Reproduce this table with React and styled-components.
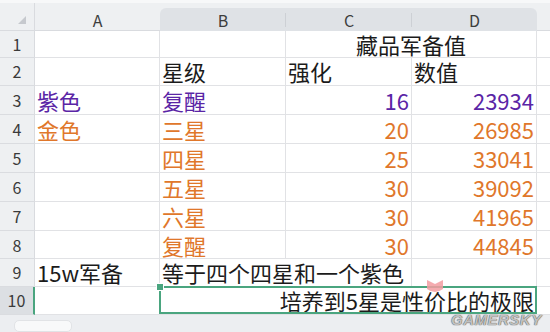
import React from 'react';
import styled, { createGlobalStyle, css } from 'styled-components';

const Global = createGlobalStyle`
  html, body { margin: 0; padding: 0; background: #f2f3f5; }
  body { font-family: "Noto Sans CJK SC", "Noto Sans", sans-serif; }
  #root { width: 550px; height: 332px; }
`;

const COLS = '35px 125px 126px 126px 125px 1fr';
const GRID = '#e1e2e5';
const GREEN = '#4aa57f';
const PURPLE = '#5a25a6';
const ORANGE = '#e0772b';
const INK = '#1b1b1b';

const Page = styled.div`
  position: relative;
  width: 550px;
  height: 332px;
  overflow: hidden;
  background: #f2f3f5;
  display: flex;
  flex-direction: column;
`;

const TopStrip = styled.div`
  height: 3px;
  background: #f7f8f9;
`;

const HeaderRow = styled.div`
  display: grid;
  grid-template-columns: ${COLS};
  height: 28px;
  background: #eef0f2;
  border-bottom: 1px solid #d9dbdf;
  box-sizing: border-box;
`;

const Corner = styled.div`
  border-right: 1px solid #d9dbdf;
  display: flex;
  align-items: flex-start;
  justify-content: flex-end;
  padding: 13px 8px 0 0;
`;

const Triangle = styled.div`
  width: 0;
  height: 0;
  border-left: 8px solid transparent;
  border-bottom: 8px solid #c6c9ce;
`;

const ColLetter = styled.div`
  display: flex;
  align-items: center;
  justify-content: center;
  font-size: 16px;
  color: #3d3d3d;
  padding-top: 4px;
`;

const SelectedBand = styled.div`
  grid-column: 3 / 6;
  margin-top: 5px;
  margin-bottom: -1px;
  background: #dfe2e6;
  border-radius: 6px 6px 0 0;
  border-bottom: 2px solid ${GREEN};
  display: grid;
  grid-template-columns: 126px 126px 125px;
`;

const BandLetter = styled.div`
  display: flex;
  align-items: center;
  justify-content: center;
  font-size: 16px;
  color: #3d3d3d;
  position: relative;
  ${p => p.$sep && css`
    &::after {
      content: '';
      position: absolute;
      right: 0;
      top: 5px;
      bottom: 5px;
      width: 1px;
      background: #cdd0d5;
    }
  `}
`;

const Row = styled.div`
  display: grid;
  grid-template-columns: ${COLS};
  height: ${p => p.$h}px;
`;

const RowNum = styled.div`
  display: flex;
  align-items: center;
  justify-content: center;
  background: ${p => (p.$selected ? '#dcdfe3' : '#eef0f2')};
  border-right: ${p => (p.$selected ? `2px solid ${GREEN}` : '1px solid #d9dbdf')};
  border-bottom: 1px solid #dadce0;
  font-size: 16px;
  color: #3a3a3a;
  box-sizing: border-box;
`;

const Cell = styled.div`
  position: relative;
  grid-column: span ${p => p.$span || 1};
  display: flex;
  align-items: center;
  justify-content: ${p =>
    p.$align === 'right' ? 'flex-end' : p.$align === 'center' ? 'center' : 'flex-start'};
  padding: ${p => (p.$align === 'right' ? '0 2px 0 0' : p.$align === 'center' ? '0' : '0 0 0 2px')};
  background: #fff;
  border-right: 1px solid ${GRID};
  border-bottom: 1px solid ${GRID};
  box-sizing: border-box;
  font-size: 22px;
  line-height: 1;
  color: ${p => p.$color || INK};
  white-space: nowrap;
  overflow: visible;
  ${p => p.$selected && css`
    &::after {
      content: '';
      position: absolute;
      inset: -1px -1px 0 -1px;
      border: 2px solid ${GREEN};
      pointer-events: none;
    }
  `}
`;

const Handle = styled.span`
  position: absolute;
  left: -4px;
  top: -4px;
  width: 6px;
  height: 6px;
  background: ${GREEN};
  border: 1px solid #fff;
  z-index: 2;
`;

const Filler = styled.div`
  background: #fff;
  border-bottom: 1px solid ${GRID};
`;

const BottomStrip = styled.div`
  flex: 1;
  background: #eceef1;
  padding: 5px 0 0 14px;
`;

const Thumb = styled.div`
  width: 56px;
  height: 10px;
  border-radius: 5px;
  background: #f8f9fa;
  border: 1px solid #e1e3e6;
`;

const Watermark = styled.div`
  position: absolute;
  left: 427px;
  top: 280px;
  width: 120px;
  height: 50px;
  pointer-events: none;
`;

const Ribbon = styled.svg`
  position: absolute;
  left: 0;
  top: 0;
`;

const Brand = styled.span`
  position: absolute;
  left: 24px;
  top: 31px;
  font-family: "Liberation Sans", Arial, sans-serif;
  font-style: italic;
  font-weight: 700;
  font-size: 15px;
  letter-spacing: 0.5px;
  color: rgba(215, 215, 215, 0.85);
  text-shadow: 0 0 1px rgba(70, 70, 70, 0.9), 0 0 1px rgba(70, 70, 70, 0.9);
`;

const rows = [
  { n: 1, h: 28, cells: [{}, {}, { span: 2, text: '藏品军备值', align: 'center' }] },
  { n: 2, h: 28, cells: [{}, { text: '星级' }, { text: '强化' }, { text: '数值' }] },
  {
    n: 3, h: 30, cells: [
      { text: '紫色', color: PURPLE }, { text: '复醒', color: PURPLE },
      { text: '16', color: PURPLE, align: 'right' }, { text: '23934', color: PURPLE, align: 'right' },
    ],
  },
  {
    n: 4, h: 30, cells: [
      { text: '金色', color: ORANGE }, { text: '三星', color: ORANGE },
      { text: '20', color: ORANGE, align: 'right' }, { text: '26985', color: ORANGE, align: 'right' },
    ],
  },
  {
    n: 5, h: 30, cells: [
      {}, { text: '四星', color: ORANGE },
      { text: '25', color: ORANGE, align: 'right' }, { text: '33041', color: ORANGE, align: 'right' },
    ],
  },
  {
    n: 6, h: 29, cells: [
      {}, { text: '五星', color: ORANGE },
      { text: '30', color: ORANGE, align: 'right' }, { text: '39092', color: ORANGE, align: 'right' },
    ],
  },
  {
    n: 7, h: 30, cells: [
      {}, { text: '六星', color: ORANGE },
      { text: '30', color: ORANGE, align: 'right' }, { text: '41965', color: ORANGE, align: 'right' },
    ],
  },
  {
    n: 8, h: 29, cells: [
      {}, { text: '复醒', color: ORANGE },
      { text: '30', color: ORANGE, align: 'right' }, { text: '44845', color: ORANGE, align: 'right' },
    ],
  },
  {
    n: 9, h: 28, cells: [
      { text: '15w军备' }, { text: '等于四个四星和一个紫色', span: 2 }, {},
    ],
  },
  {
    n: 10, h: 29, selected: true, cells: [
      {}, { text: '培养到5星是性价比的极限', span: 3, align: 'right', selected: true },
    ],
  },
];

export default function App() {
  return (
    <Page>
      <Global />
      <TopStrip />
      <HeaderRow>
        <Corner><Triangle /></Corner>
        <ColLetter>A</ColLetter>
        <SelectedBand>
          <BandLetter $sep>B</BandLetter>
          <BandLetter $sep>C</BandLetter>
          <BandLetter>D</BandLetter>
        </SelectedBand>
        <div />
      </HeaderRow>
      {rows.map(r => (
        <Row key={r.n} $h={r.h}>
          <RowNum $selected={r.selected}>{r.n}</RowNum>
          {r.cells.map((c, i) => (
            <Cell
              key={i}
              $span={c.span}
              $align={c.align}
              $color={c.color}
              $selected={c.selected}
            >
              {c.selected && <Handle />}
              {c.text}
            </Cell>
          ))}
          <Filler />
        </Row>
      ))}
      <BottomStrip><Thumb /></BottomStrip>
      <Watermark>
        <Ribbon width="16" height="14" viewBox="0 0 16 14">
          <path d="M0 0 L8 4 L16 0 L16 9 Q8 15 0 9 Z" fill="#f39ca1" opacity="0.85" />
        </Ribbon>
        <Brand>GAMERSKY</Brand>
      </Watermark>
    </Page>
  );
}
